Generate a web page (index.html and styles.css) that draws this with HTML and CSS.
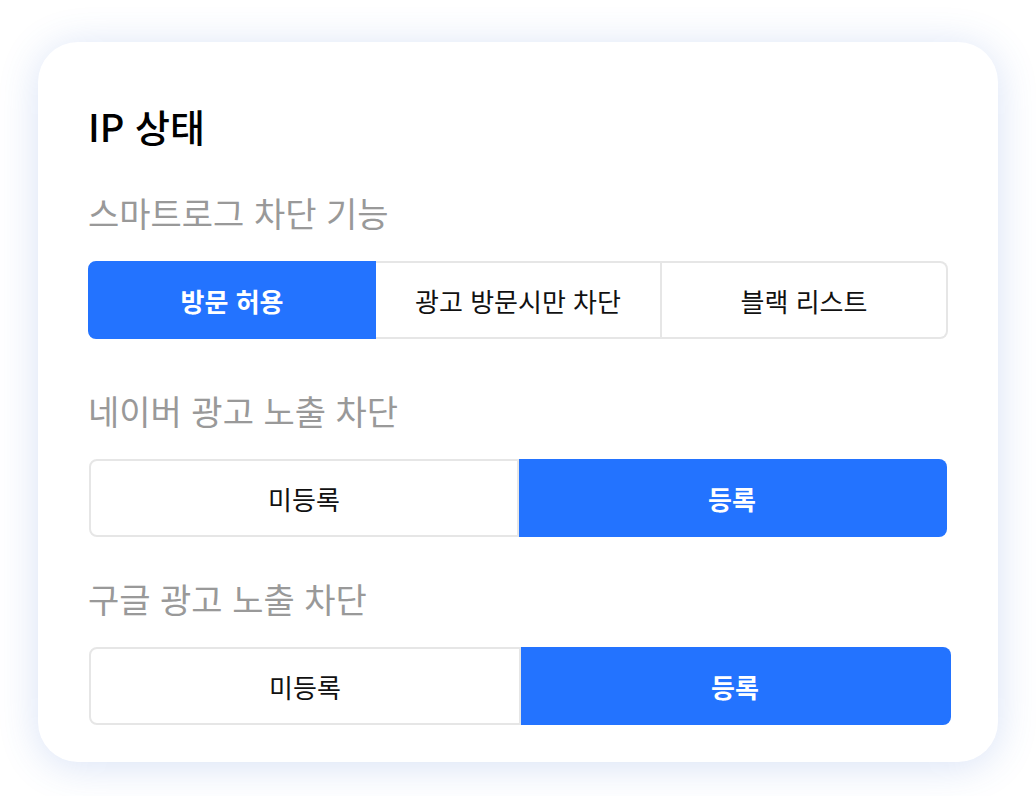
FILE: index.html
```html
<!DOCTYPE html>
<html lang="ko">
<head>
    <meta charset="UTF-8">
    <meta name="viewport" content="width=device-width, initial-scale=1.0">
    <title>IP 상태</title>
    <link rel="stylesheet" href="styles.css">
</head>
<body>

    <div class="card">
        <h1 class="title">IP 상태</h1>

        <h2 class="label first">스마트로그 차단 기능</h2>
        <div class="segment row-smart">
            <button class="seg active">방문 허용</button>
            <button class="seg">광고 방문시만 차단</button>
            <button class="seg">블랙 리스트</button>
        </div>

        <h2 class="label">네이버 광고 노출 차단</h2>
        <div class="segment row-naver">
            <button class="seg">미등록</button>
            <button class="seg active">등록</button>
        </div>

        <h2 class="label third">구글 광고 노출 차단</h2>
        <div class="segment row-google">
            <button class="seg">미등록</button>
            <button class="seg active">등록</button>
        </div>
    </div>

</body>
</html>
```

FILE: styles.css
```css
body {
    margin: 0;
    padding: 0 0 40px 0;
    background-color: #fff;
    font-family: "Noto Sans CJK KR", "Noto Sans", sans-serif;
    color: #111;
}
.card {
    box-sizing: border-box;
    width: 960px;
    height: 720px;
    margin: 42px 0 0 38px;
    padding: 60px 48px 0 50px;
    background-color: #fff;
    border-radius: 40px;
    box-shadow: 0 4px 40px rgba(60, 110, 210, 0.2);
}
.title {
    margin: 0;
    font-size: 38px;
    line-height: 48px;
    font-weight: 500;
    color: #000;
}
.label {
    margin: 48px 0 24px 0;
    font-size: 34px;
    line-height: 48px;
    font-weight: 400;
    color: #999;
}
.label.first {
    margin-top: 39px;
}
.label.third {
    margin-top: 38px;
}
.segment {
    display: flex;
    height: 78px;
}
.row-smart {
    width: 860px;
}
.row-naver {
    width: 858px;
    margin-left: 1px;
}
.row-google {
    width: 862px;
    margin-left: 1px;
}
.seg {
    flex: 1;
    margin: 0;
    padding: 0;
    font-family: inherit;
    font-size: 26px;
    font-weight: 400;
    color: #111;
    background-color: #fff;
    border: 2px solid #e6e6e6;
    border-left: none;
    border-radius: 0;
    cursor: pointer;
}
.seg:first-child {
    border-left: 2px solid #e6e6e6;
    border-radius: 8px 0 0 8px;
}
.seg:last-child {
    border-radius: 0 8px 8px 0;
}
.seg.active {
    background-color: #2373ff;
    border-color: #2373ff;
    color: #fff;
    font-weight: 700;
}
```
